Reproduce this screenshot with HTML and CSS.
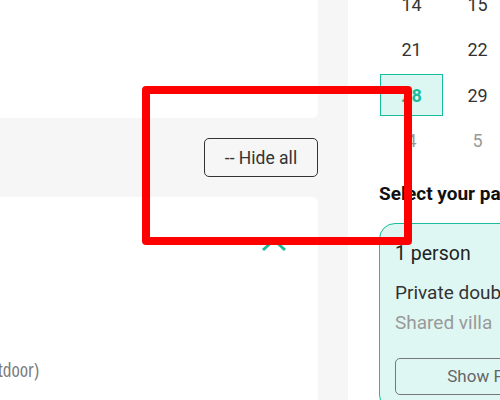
FILE: index.html
```html
<!DOCTYPE html>
<html lang="en">
<head>
<meta charset="utf-8">
<title>Booking</title>
<link rel="stylesheet" href="styles.css">
</head>
<body>
<div class="page">
  <div class="left">
    <div class="card card-top"></div>
    <div class="band">
      <button class="hide-btn" type="button">-- Hide all</button>
    </div>
    <div class="card card-bottom">
      <div class="chev-row">
        <svg class="chev" width="26" height="16" viewBox="0 0 26 16"><polyline points="2,13 13,3 24,13" fill="none" stroke="#1abc9c" stroke-width="3"/></svg>
      </div>
      <p class="feature">Pool (outdoor)</p>
    </div>
  </div>
  <div class="right">
    <div class="calendar">
      <span class="day">14</span><span class="day">15</span><span class="day">16</span><span class="day">17</span><span class="day">18</span><span class="day">19</span><span class="day">20</span>
      <span class="day">21</span><span class="day">22</span><span class="day">23</span><span class="day">24</span><span class="day">25</span><span class="day">26</span><span class="day">27</span>
      <span class="day selected">28</span><span class="day">29</span><span class="day">30</span><span class="day">31</span><span class="day muted">1</span><span class="day muted">2</span><span class="day muted">3</span>
      <span class="day muted">4</span><span class="day muted">5</span><span class="day muted">6</span><span class="day muted">7</span><span class="day muted">8</span><span class="day muted">9</span><span class="day muted">10</span>
    </div>
    <h3 class="section-title">Select your package</h3>
    <div class="package">
      <div class="pkg-title">1 person</div>
      <div class="pkg-room">Private double room</div>
      <div class="pkg-sub">Shared villa</div>
      <button class="show-btn" type="button">Show Prices</button>
    </div>
  </div>
  <div class="annot"></div>
</div>
</body>
</html>
```

FILE: styles.css
```css
* { box-sizing: border-box; }
html, body { margin: 0; padding: 0; }
body {
  width: 500px;
  height: 400px;
  overflow: hidden;
  background: #f6f6f6;
  font-family: Roboto, "Liberation Sans", sans-serif;
  color: #333;
}
.page {
  position: relative;
  display: flex;
  gap: 30px;
  height: 400px;
  width: 800px;
}
.left {
  width: 318px;
  flex: none;
  display: flex;
  flex-direction: column;
}
.card {
  background: #fff;
}
.card-top {
  height: 118px;
  border-bottom-right-radius: 6px;
}
.band {
  height: 79px;
  display: flex;
  justify-content: flex-end;
  align-items: center;
}
.hide-btn {
  width: 114px;
  height: 39px;
  padding: 0;
  background: transparent;
  border: 1px solid #333;
  border-radius: 5px;
  font-family: Roboto, "Liberation Sans", sans-serif;
  font-size: 17.5px;
  color: #333;
}
.card-bottom {
  flex: 1;
  border-top-right-radius: 6px;
}
.chev-row {
  display: flex;
  justify-content: flex-end;
  padding: 40px 31px 0 0;
}
.chev { display: block; }
.feature {
  margin: 105px 0 0 -57px;
  font-family: "Open Sans", sans-serif;
  font-stretch: 75%;
  font-size: 19px;
  line-height: 24px;
  color: #7a7a7a;
  white-space: nowrap;
}
.right {
  flex: 1;
  background: #fff;
  padding-left: 32px;
}
.calendar {
  display: grid;
  grid-template-columns: repeat(7, 63px);
  grid-auto-rows: 42px;
  column-gap: 3px;
  row-gap: 3.5px;
  margin-top: -17px;
}
.day {
  display: flex;
  align-items: center;
  justify-content: center;
  font-size: 18px;
  color: #333;
}
.day.muted { color: #999; }
.day.selected {
  background: #dcf7f1;
  border: 1px solid #1abc9c;
  color: #1abc9c;
  font-weight: 700;
}
.section-title {
  margin: 20px 0 0 -1px;
  font-size: 19px;
  line-height: 24px;
  font-weight: 700;
  color: #111;
  white-space: nowrap;
}
.package {
  margin: 17px 0 0 -1px;
  width: 300px;
  background: #dff7f3;
  border: 1px solid #1abc9c;
  border-radius: 16px;
  padding: 18px 15px 15px;
}
.pkg-title {
  font-size: 19.5px;
  line-height: 24px;
  color: #222;
}
.pkg-room {
  margin-top: 15px;
  font-size: 19px;
  line-height: 24px;
  color: #333;
  white-space: nowrap;
}
.pkg-sub {
  margin-top: 6px;
  font-size: 19px;
  line-height: 24px;
  color: #999;
}
.show-btn {
  margin-top: 23px;
  width: 198px;
  height: 37px;
  background: transparent;
  border: 1px solid #777;
  border-radius: 5px;
  font-family: Roboto, "Liberation Sans", sans-serif;
  font-size: 17px;
  color: #666;
}
.annot {
  position: absolute;
  left: 142px;
  top: 86px;
  width: 270px;
  height: 159px;
  border: 8px solid #ff0000;
  border-radius: 4px;
}
```
